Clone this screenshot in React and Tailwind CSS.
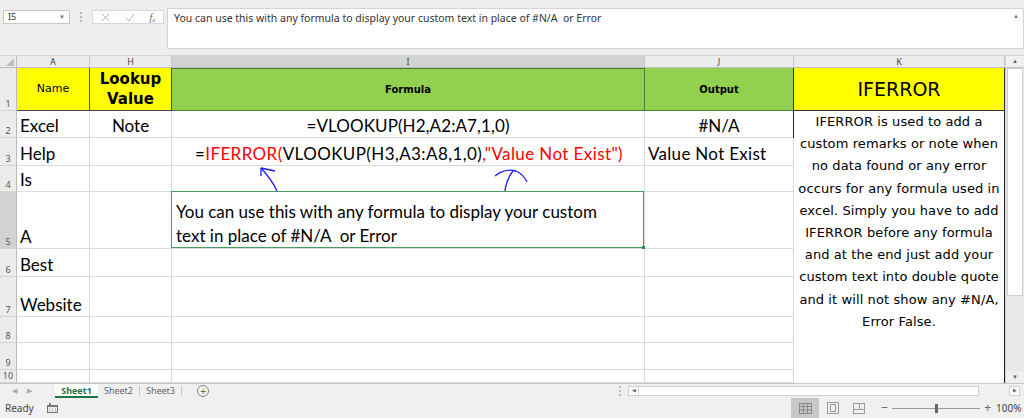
import React from "react";

const CAL = { fontFamily: "Lato, 'Open Sans', sans-serif" };
const COMIC = { fontFamily: "'Comic Sans MS', 'DejaVu Sans', sans-serif" };
const UI = { fontFamily: "'Noto Sans', 'Open Sans', sans-serif" };

function RowHead({ n, sel }) {
  return (
    <div
      className={`flex items-end justify-center border-r border-b border-r-[#bdbdbd] border-b-[#d4d4d4] text-[9px] leading-[11px] pb-[1px] text-[#555] ${
        sel ? "bg-[#d2d2d2]" : "bg-[#ececec]"
      }`}
      style={UI}
    >
      {n}
    </div>
  );
}

function Cell({ children, className = "" }) {
  return (
    <div
      className={`flex items-end border-r border-b border-[#dadada] text-[17px] leading-[23px] text-black whitespace-nowrap overflow-visible ${className}`}
      style={CAL}
    >
      {children}
    </div>
  );
}

function ColHead({ children, sel }) {
  return (
    <div
      className={`flex items-center justify-center border-r border-b border-r-[#c6c6c6] border-b-[#bdbdbd] text-[9px] text-[#444] ${
        sel ? "bg-[#d2d2d2]" : "bg-[#ececec]"
      }`}
      style={UI}
    >
      {children}
    </div>
  );
}

const kLines = [
  "IFERROR is used to add a",
  "custom remarks or note when",
  "no data found or any error",
  "occurs for any formula used in",
  "excel. Simply you have to add",
  "IFERROR before any formula",
  "and at the end just add your",
  "custom text into double quote",
  "and it will not show any #N/A,",
  "Error False.",
];

export default function App() {
  return (
    <div className="w-[1024px] h-[418px] overflow-hidden bg-[#f0f0f0] flex flex-col select-none">
      {/* Formula bar area */}
      <div className="h-[56px] flex bg-[#eeeeee] border-b border-[#d4d4d4]">
        <div className="pt-[10px] pl-[3px] flex items-start">
          <div
            className="w-[67px] h-[14px] bg-white border border-[#c6c6c6] flex items-center justify-between px-[4px] text-[9px] text-[#333]"
            style={UI}
          >
            <span>I5</span>
            <span className="text-[6px] text-[#777]">▼</span>
          </div>
          <div className="w-[22px] flex flex-col items-center gap-[2px] pt-[2px]">
            <span className="w-[2px] h-[2px] bg-[#bbb]" />
            <span className="w-[2px] h-[2px] bg-[#bbb]" />
            <span className="w-[2px] h-[2px] bg-[#bbb]" />
          </div>
          <div className="w-[72px] h-[14px] bg-white border border-[#d8d8d8] flex items-center justify-around text-[11px] text-[#aaa]">
            <svg width="9" height="9" viewBox="0 0 9 9">
              <path d="M1 1L8 8M8 1L1 8" stroke="#b5b5b5" strokeWidth="1" />
            </svg>
            <svg width="10" height="9" viewBox="0 0 10 9">
              <path d="M1 5L4 8L9 1" stroke="#b5b5b5" strokeWidth="1" fill="none" />
            </svg>
            <span className="italic text-[10px] text-[#666]" style={{ fontFamily: "'Liberation Serif', serif" }}>
              f<sub className="text-[7px]">x</sub>
            </span>
          </div>
        </div>
        <div className="ml-[3px] mt-[8px] h-[41px] flex-1 bg-white border border-[#d4d4d4] relative">
          <div className="pl-[6px] pt-[2px] text-[10.5px] text-[#333]" style={UI}>
            You can use this with any formula to display your custom text in place of #N/A&nbsp; or Error
          </div>
          <span className="absolute right-[4px] top-[3px] text-[6px] text-[#777]">▲</span>
        </div>
      </div>

      {/* Grid area */}
      <div className="flex h-[327px] bg-white">
        <div className="relative w-[1005px]">
          <div
            className="grid w-[1005px]"
            style={{
              gridTemplateColumns: "17px 73px 82px 473px 149px 211px",
              gridTemplateRows: "12px 43px 27px 28px 26px 57px 28px 40px 26px 27px 13px",
            }}
          >
            {/* Header row */}
            <div className="bg-[#ececec] border-r border-b border-[#bdbdbd] relative">
              <svg className="absolute right-[2px] bottom-[1px]" width="8" height="8" viewBox="0 0 8 8">
                <path d="M8 0L8 8L0 8Z" fill="#c0c0c0" />
              </svg>
            </div>
            <ColHead>A</ColHead>
            <ColHead>H</ColHead>
            <ColHead sel>I</ColHead>
            <ColHead>J</ColHead>
            <ColHead>K</ColHead>

            {/* Row 1 */}
            <RowHead n={1} />
            <div className="bg-[#ffff00] border-r border-b border-r-[#444] border-b-[#444] flex items-center justify-center text-[11px] text-black" style={COMIC}>
              Name
            </div>
            <div className="bg-[#ffff00] border-r border-b border-r-[#444] border-b-[#444] flex flex-col items-center justify-center text-[15px] leading-[20px] font-bold text-black" style={COMIC}>
              <span>Lookup</span>
              <span>Value</span>
            </div>
            <div className="bg-[#92d050] border-r border-b border-r-[#4f7a35] border-b-[#4f7a35] border-t border-t-[#4f7a35] flex items-center justify-center text-[10px] font-bold text-black" style={COMIC}>
              Formula
            </div>
            <div className="bg-[#92d050] border-r border-b border-r-[#333] border-b-[#4f7a35] flex items-center justify-center text-[10px] font-bold text-black" style={COMIC}>
              Output
            </div>
            <div className="bg-[#ffff00] border-r border-b border-[#333] flex items-center justify-center text-[19px] text-black" style={COMIC}>
              IFERROR
            </div>

            {/* Row 2 */}
            <RowHead n={2} />
            <Cell className="pl-[3px]">Excel</Cell>
            <Cell className="justify-center">Note</Cell>
            <Cell className="justify-center tracking-[0.1px]">=VLOOKUP(H2,A2:A7,1,0)</Cell>
            <Cell className="justify-center">#N/A</Cell>
            <div
              className="row-span-9 border-r border-l border-[#222] -ml-[1px] bg-white flex flex-col items-center pt-[0px] text-[13px] leading-[22.2px] tracking-[0.1px] text-black"
              style={COMIC}
            >
              {kLines.map((l, i) => (
                <div key={i} className="whitespace-nowrap">
                  {l}
                </div>
              ))}
            </div>

            {/* Row 3 */}
            <RowHead n={3} />
            <Cell className="pl-[3px]">Help</Cell>
            <Cell />
            <Cell className="justify-center pl-[2px] tracking-[0.4px]">
              <span>
                =<span className="text-[#ff0000]">IFERROR(</span>VLOOKUP(H3,A3:A8,1,0)
                <span className="text-[#ff0000]">,"Value Not Exist")</span>
              </span>
            </Cell>
            <Cell className="pl-[3px] tracking-[0.3px]">Value Not Exist</Cell>

            {/* Row 4 */}
            <RowHead n={4} />
            <Cell className="pl-[3px]">Is</Cell>
            <Cell />
            <Cell />
            <Cell />

            {/* Row 5 */}
            <RowHead n={5} sel />
            <Cell className="pl-[3px]">A</Cell>
            <Cell />
            <div className="relative border-r border-b border-[#dadada]">
              <div
                className="absolute -left-[1px] -top-[1px] right-0 bottom-0 border border-[#4a9a63] bg-white pl-[4px] pt-[8px] text-[17px] leading-[24px] text-black whitespace-nowrap"
                style={CAL}
              >
                <div>You can use this with any formula to display your custom</div>
                <div>text in place of #N/A&nbsp; or Error</div>
                <span className="absolute -right-[2px] -bottom-[2px] w-[3px] h-[3px] bg-[#2f8a4c]" />
              </div>
            </div>
            <Cell />

            {/* Row 6 */}
            <RowHead n={6} />
            <Cell className="pl-[3px]">Best</Cell>
            <Cell />
            <Cell />
            <Cell />

            {/* Row 7 */}
            <RowHead n={7} />
            <Cell className="pl-[3px]">Website</Cell>
            <Cell />
            <Cell />
            <Cell />

            {/* Row 8 */}
            <RowHead n={8} />
            <Cell />
            <Cell />
            <Cell />
            <Cell />

            {/* Row 9 */}
            <RowHead n={9} />
            <Cell />
            <Cell />
            <Cell />
            <Cell />

            {/* Row 10 */}
            <RowHead n={10} />
            <Cell />
            <Cell />
            <Cell />
            <Cell />
          </div>

          {/* hand-drawn arrows */}
          <svg className="absolute left-0 top-0 pointer-events-none" width="1005" height="327" viewBox="0 56 1005 327">
            <path d="M277 191 Q272 180 261 168" stroke="#1a1aff" strokeWidth="1.3" fill="none" />
            <path d="M261 168 L261 176 M261 168 L275 171" stroke="#1a1aff" strokeWidth="1.3" fill="none" />
            <path d="M505 191 Q506 180 513 171" stroke="#1a1aff" strokeWidth="1.3" fill="none" />
            <path d="M495 176 Q505 168 516 171 Q523 174 527 182" stroke="#1a1aff" strokeWidth="1.3" fill="none" />
          </svg>
        </div>

        {/* vertical scrollbar */}
        <div className="w-[19px] bg-[#e8e8e8] border-l border-[#d4d4d4] flex flex-col">
          <div className="h-[12px] bg-[#f0f0f0] border-b border-[#c6c6c6] flex items-center justify-center text-[6px] text-[#666]">▲</div>
          <div className="mx-[1px] h-[228px] bg-white border border-[#cfcfcf]" />
          <div className="flex-1" />
          <div className="h-[12px] bg-[#f0f0f0] flex items-center justify-center text-[6px] text-[#666]">▼</div>
        </div>
      </div>

      {/* Sheet tabs */}
      <div className="h-[15px] flex items-stretch bg-[#f0f0f0] border-t border-[#c6c6c6] text-[9px]" style={UI}>
        <div className="w-[55px] flex items-center gap-[10px] pl-[12px] text-[7px] text-[#aaa]">
          <span>◀</span>
          <span>▶</span>
        </div>
        <div className="w-[43px] bg-white border-b-2 border-[#217346] flex items-center justify-center font-bold text-[#217346] leading-none">
          Sheet1
        </div>
        <div className="w-[42px] flex items-center justify-center text-[#666] border-r border-[#c6c6c6] my-[2px]">Sheet2</div>
        <div className="w-[42px] flex items-center justify-center text-[#666] border-r border-[#c6c6c6] my-[2px]">Sheet3</div>
        <div className="w-[42px] flex items-center justify-center">
          <span className="w-[12px] h-[12px] rounded-full border border-[#888] flex items-center justify-center text-[10px] leading-none text-[#666]">+</span>
        </div>
        <div className="w-[390px]" />
        <div className="w-[12px] flex flex-col items-center justify-center gap-[2px]">
          <span className="w-[2px] h-[2px] bg-[#bbb]" />
          <span className="w-[2px] h-[2px] bg-[#bbb]" />
          <span className="w-[2px] h-[2px] bg-[#bbb]" />
        </div>
        <div className="flex items-center ml-[2px] my-[2px]">
          <div className="w-[11px] h-full bg-white border border-[#d0d0d0] flex items-center justify-center text-[5px] text-[#666]">◀</div>
          <div className="w-[340px] h-full bg-white border-y border-r border-[#d0d0d0]" />
          <div className="w-[30px] h-full" />
          <div className="w-[11px] h-full bg-white border border-[#d0d0d0] flex items-center justify-center text-[5px] text-[#666]">▶</div>
        </div>
      </div>

      {/* Status bar */}
      <div className="h-[20px] flex items-center bg-[#f0f0f0] text-[10px] text-[#444]" style={UI}>
        <span className="pl-[5px]">Ready</span>
        <svg className="ml-[13px]" width="11" height="10" viewBox="0 0 11 10">
          <rect x="0.5" y="2.5" width="10" height="7" fill="none" stroke="#777" />
          <rect x="0" y="2" width="11" height="2" fill="#777" />
          <rect x="2" y="0" width="2" height="3" fill="#777" />
          <path d="M2 6h1M5 6h1M8 6h1M2 8h1M5 8h1M8 8h1" stroke="#999" />
        </svg>
        <div className="flex-1" />
        <div className="w-[28px] h-[20px] bg-[#c8c8c8] flex items-center justify-center">
          <svg width="13" height="11" viewBox="0 0 13 11">
            <rect x="0.5" y="0.5" width="12" height="10" fill="none" stroke="#888" />
            <path d="M4.5 0v11M8.5 0v11M0 3.5h13M0 7h13" stroke="#888" />
          </svg>
        </div>
        <div className="w-[28px] flex items-center justify-center">
          <svg width="12" height="12" viewBox="0 0 12 12">
            <rect x="0.5" y="0.5" width="11" height="11" fill="none" stroke="#999" />
            <rect x="3.5" y="2.5" width="5" height="7" fill="none" stroke="#999" />
          </svg>
        </div>
        <div className="w-[24px] flex items-center justify-center">
          <svg width="12" height="11" viewBox="0 0 12 11">
            <rect x="0.5" y="0.5" width="11" height="10" fill="none" stroke="#999" />
            <path d="M0 6.5h12M6.5 0v6.5" stroke="#999" />
          </svg>
        </div>
        <span className="ml-[10px] text-[#666] text-[12px] leading-none">−</span>
        <div className="relative w-[88px] h-[1px] bg-[#999] mx-[4px]">
          <span className="absolute left-[43px] -top-[4px] w-[3px] h-[9px] bg-[#666]" />
        </div>
        <span className="text-[#666] text-[12px] leading-none">+</span>
        <span className="ml-[5px] pr-[0px] w-[28px] overflow-hidden whitespace-nowrap">100%</span>
      </div>
    </div>
  );
}
